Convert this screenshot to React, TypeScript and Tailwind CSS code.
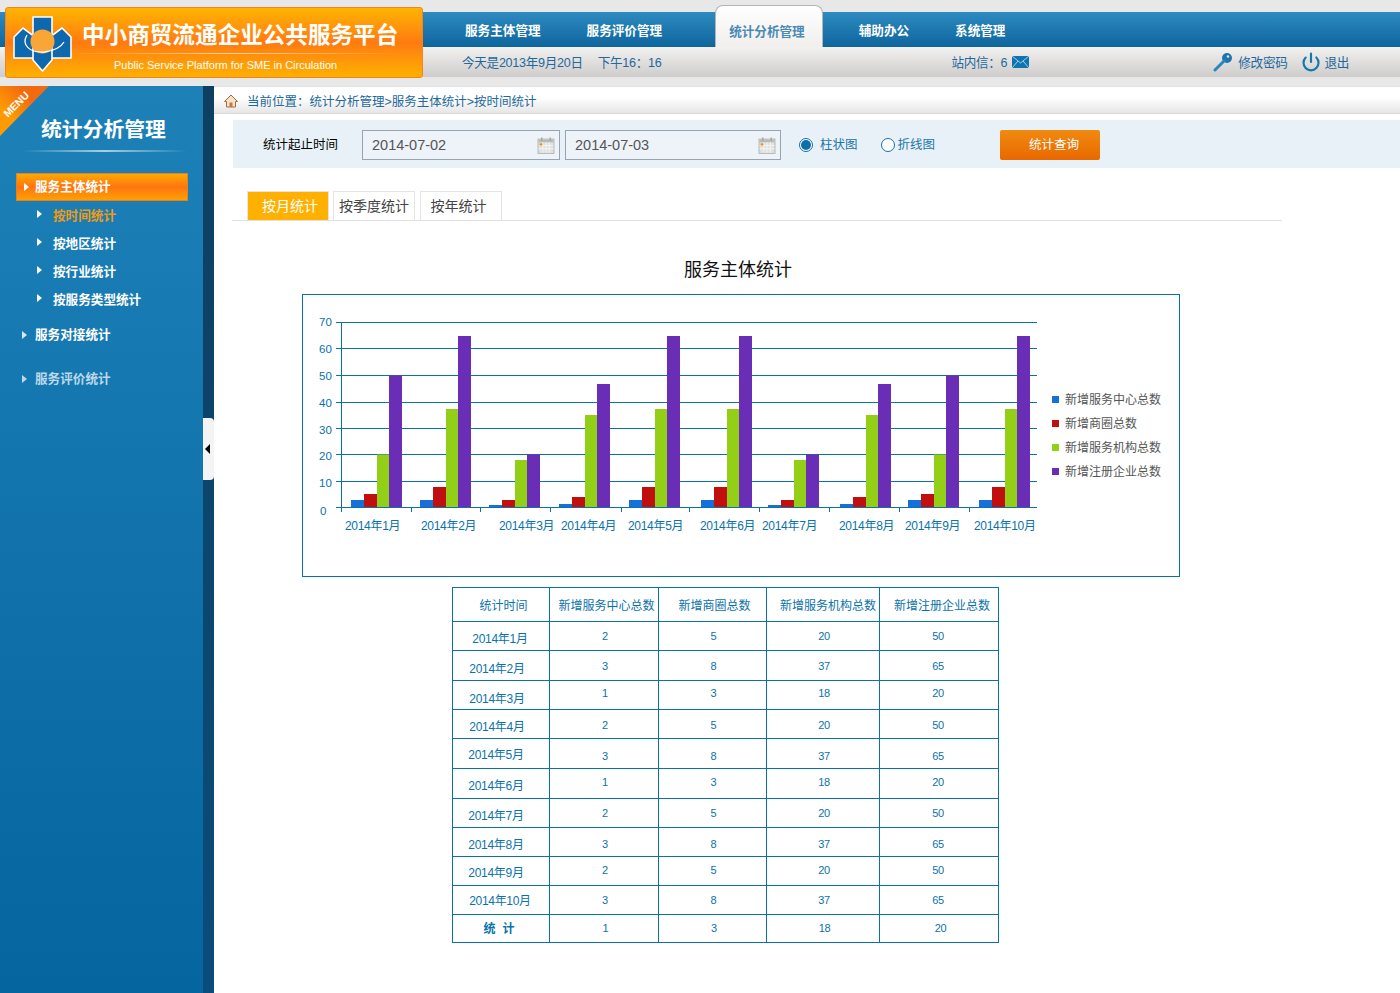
import { Power } from "lucide-react";

const CJK = "font-['Liberation_Sans','Noto_Sans_CJK_SC',sans-serif]";
const BLUE = "#0a72aa";

const series = ["#1570dc", "#c00f0d", "#94cf18", "#6a2db5"];
const legend = ["新增服务中心总数", "新增商圈总数", "新增服务机构总数", "新增注册企业总数"];

// pixel tops of each bar, read off the reference
const barTops: Record<string, number[]> = {
  a: [500, 494, 454.5, 375.5],
  b: [500, 487, 409, 336],
  c: [505, 500, 460, 454.5],
  d: [504, 497, 415, 384],
};

const groups = [
  { x: 351, kind: "a", label: "2014年1月", lx: 345 },
  { x: 420, kind: "b", label: "2014年2月", lx: 421 },
  { x: 489, kind: "c", label: "2014年3月", lx: 499 },
  { x: 559, kind: "d", label: "2014年4月", lx: 561 },
  { x: 629, kind: "b", label: "2014年5月", lx: 628 },
  { x: 701, kind: "b", label: "2014年6月", lx: 700 },
  { x: 768, kind: "c", label: "2014年7月", lx: 762 },
  { x: 840, kind: "d", label: "2014年8月", lx: 839 },
  { x: 908, kind: "a", label: "2014年9月", lx: 905 },
  { x: 979, kind: "b", label: "2014年10月", lx: 974 },
];

const gridY = [322, 348, 375, 402, 428, 454, 481, 507];
const axisLabels = [
  { v: 70, y: 326 },
  { v: 60, y: 353 },
  { v: 50, y: 380 },
  { v: 40, y: 407 },
  { v: 30, y: 434 },
  { v: 20, y: 460 },
  { v: 10, y: 487 },
];
const ticks = [341, 411, 480, 550, 621, 689, 759, 829, 899, 969];

const rows = [
  { t: "2014年1月", h: 29, dt: 2, dn: 0, dx: 1, v: [2, 5, 20, 50] },
  { t: "2014年2月", h: 30, dt: 3, dn: 1, dx: 4, v: [3, 8, 37, 65] },
  { t: "2014年3月", h: 29, dt: 3, dn: -2, dx: 4, v: [1, 3, 18, 20] },
  { t: "2014年4月", h: 29, dt: 2, dn: 1, dx: 4, v: [2, 5, 20, 50] },
  { t: "2014年5月", h: 30, dt: 1, dn: 3, dx: 5, v: [3, 8, 37, 65] },
  { t: "2014年6月", h: 30, dt: 2, dn: -1, dx: 5, v: [1, 3, 18, 20] },
  { t: "2014年7月", h: 29, dt: 2, dn: 0, dx: 5, v: [2, 5, 20, 50] },
  { t: "2014年8月", h: 29, dt: 2, dn: 2, dx: 5, v: [3, 8, 37, 65] },
  { t: "2014年9月", h: 29, dt: 1, dn: -1, dx: 5, v: [2, 5, 20, 50] },
  { t: "2014年10月", h: 29, dt: 0, dn: 0, dx: 1, v: [3, 8, 37, 65] },
];

function Logo() {
  return (
    <svg width="75" height="70" viewBox="0 0 75 70" className="absolute left-0 top-0">
      <g fill="#0e68ad" stroke="#fff" strokeWidth="1.6">
        <polygon points="17,20 8,29 8,50 29,50 29,29" />
        <polygon points="56,20 65,29 65,50 44,50 44,29" />
        <polygon points="27,9 46,9 46,52 36.5,63 27,52" />
      </g>
      <circle cx="36.5" cy="33.5" r="12" fill="#f9a637" />
      <path d="M21 27C15 37 24 45 38 44C48 43 55 39 58 34" fill="none" stroke="#fff" strokeWidth="1.3" />
    </svg>
  );
}

function Header() {
  return (
    <header className="relative h-[86px] bg-[#e8e8e8] pt-[12px]">
      <nav className="flex h-[35px] items-center bg-gradient-to-b from-[#2d8bc0] to-[#0d659d] pl-[465px] pt-[4px] text-[12.6px] font-bold text-white">
        <span>服务主体管理</span>
        <span className="ml-[46px]">服务评价管理</span>
        <span className="-mt-[11px] ml-[53px] flex h-[42px] items-center self-start rounded-t-lg border border-b-0 border-[#b5b5b5] bg-gradient-to-b from-white to-[#f0efec] pl-[13px] pr-[17px] pt-[12px] text-[#4a8ab5]">
          统计分析管理
        </span>
        <span className="ml-[36px]">辅助办公</span>
        <span className="ml-[46px]">系统管理</span>
      </nav>
      <div className="flex h-[30px] items-center bg-gradient-to-b from-[#f3f2ef] to-[#cfcccc] pl-[462px] pt-[3px] text-[12.6px] tracking-[-0.3px] text-[#23689c]">
        <span>今天是2013年9月20日</span>
        <span className="ml-[15px]">下午16：16</span>
        <span className="ml-[290px]">站内信：6</span>
        <svg width="17" height="12" viewBox="0 0 17 12" className="-mt-[3px] ml-[5px]">
          <rect width="17" height="12" fill="#0f75b0" />
          <path d="M0 0L8.5 7L17 0M0 12L6 5M17 12L11 5" fill="none" stroke="#cfe4f0" strokeWidth="0.8" />
        </svg>
        <svg width="20" height="20" viewBox="0 0 20 20" className="-mt-[3px] ml-[184px]">
          <circle cx="14" cy="6" r="5" fill="#1c76ad" />
          <circle cx="15" cy="4.5" r="1.2" fill="#e8e8e8" />
          <path d="M11 9L2 18" stroke="#2d86bb" strokeWidth="3" strokeLinecap="round" />
        </svg>
        <span className="ml-[5px]">修改密码</span>
        <Power size={20} strokeWidth={2.6} className="-mt-[3px] ml-[14px] text-[#1379ae]" />
        <span className="ml-[3px]">退出</span>
      </div>
      <div className="absolute left-[5px] top-[7px] h-[71px] w-[418px] rounded-[3px] border border-[#f5811f] bg-gradient-to-b from-[#ffb400] via-[#ff7a10] to-[#ffb000] text-white">
        <Logo />
        <div className="whitespace-nowrap pl-[76px] pt-[12px] text-[22.6px] font-bold leading-[32px]">
          中小商贸流通企业公共服务平台
        </div>
        <div className="ml-[55px] mt-[1px] h-px w-[340px] bg-gradient-to-r from-transparent via-[#ffd9a0] to-transparent" />
        <div className="pl-[108px] pt-[4px] font-['Liberation_Sans',sans-serif] text-[11px] leading-[14px]">
          Public Service Platform for SME in Circulation
        </div>
      </div>
    </header>
  );
}

function Arrow({ className }: { className: string }) {
  return <span className={`inline-block h-0 w-0 border-y-[4.5px] border-l-[5px] border-y-transparent ${className}`} />;
}

function Sidebar() {
  return (
    <aside className="relative w-[203px] shrink-0 bg-gradient-to-b from-[#1d81b8] to-[#04659f] text-[12.6px] font-bold text-white">
      <svg width="50" height="50" viewBox="0 0 50 50" className="absolute left-0 top-0">
        <defs>
          <linearGradient id="menu" x1="0" y1="1" x2="1" y2="0">
            <stop offset="0.3" stopColor="#ff9a00" />
            <stop offset="0.7" stopColor="#f26a10" />
          </linearGradient>
        </defs>
        <polygon points="0,0 49,0 0,50" fill="url(#menu)" />
        <text x="16" y="22" transform="rotate(-45 16 18)" textAnchor="middle" fontSize="10.5" fontWeight="700" fill="#fff" className="font-['Liberation_Sans',sans-serif]">
          MENU
        </text>
      </svg>
      <div className="pl-[41px] pt-[30px] text-[20.8px] leading-[28px]">统计分析管理</div>
      <div className="ml-[22px] mt-[6px] h-[2px] w-[165px] bg-gradient-to-r from-transparent via-[#a9cfe3] to-transparent" />
      <div className="ml-[16px] mt-[21px] flex h-[28px] w-[172px] items-center gap-[6px] border border-[#e8801f] bg-gradient-to-b from-[#ffa800] via-[#ff7410] to-[#ffa000] pl-[7px]">
        <Arrow className="border-l-white" />
        <span className="pt-[1px]">服务主体统计</span>
      </div>
      <ul className="mt-[1px] pl-[37px]">
        {["按时间统计", "按地区统计", "按行业统计", "按服务类型统计"].map((t, i) => (
          <li key={t} className="flex h-[28px] items-center gap-[11px]">
            <Arrow className="-mt-[4px] border-l-white" />
            <span className={i === 0 ? "text-[#ef9a12]" : ""}>{t}</span>
          </li>
        ))}
      </ul>
      <div className="mt-[7px] flex h-[28px] items-center gap-[8px] pl-[22px]">
        <Arrow className="border-l-[#d6e8f3]" />
        <span>服务对接统计</span>
      </div>
      <div className="mt-[16px] flex h-[28px] items-center gap-[8px] pl-[22px] text-[#bcd8e9]">
        <Arrow className="border-l-[#bcd8e9]" />
        <span>服务评价统计</span>
      </div>
    </aside>
  );
}

function CalendarIcon() {
  return (
    <svg width="18" height="17" viewBox="0 0 16 16" className="mt-[1px] shrink-0">
      <rect x="0.5" y="2" width="15" height="13.5" fill="#dfe1df" stroke="#b9bbb8" />
      <rect x="1" y="2.5" width="14" height="2.5" fill="#b9bbb8" />
      <path d="M4 0.5V3.5M12 0.5V3.5" stroke="#a5a7a4" strokeWidth="1.4" />
      <path d="M1 8H15M1 11H15M5 5V15M8 5V15M11 5V15" stroke="#f7f7f7" strokeWidth="0.8" />
      <rect x="2" y="6" width="2.5" height="2" fill="#f08a1d" />
    </svg>
  );
}

function DateInput({ value, width }: { value: string; width: string }) {
  return (
    <div className={`flex h-[30px] items-center justify-between border border-[#98a4b0] bg-[#edf3f9] pl-[9px] pr-[4px] ${width}`}>
      <span className="pt-[1px] font-['Liberation_Sans',sans-serif] text-[14.5px] text-[#555]">{value}</span>
      <CalendarIcon />
    </div>
  );
}

function Breadcrumb() {
  return (
    <div className="flex h-[28px] items-center border-y border-b-[#d8d8d8] border-t-[#e2e2e2] bg-gradient-to-b from-white from-40% to-[#e6e6e6] pl-[10px] pt-[5px] text-[12.5px] text-[#23689c]">
      <svg width="14" height="14" viewBox="0 0 14 14" className="-mt-[3px]">
        <path d="M7 1L0.5 7.5H2.5V13H11.5V7.5H13.5Z" fill="#f6e3c6" stroke="#a86a45" strokeWidth="1" />
        <rect x="5.5" y="8.5" width="3" height="4.5" fill="#c9793f" />
      </svg>
      <span className="ml-[9px]">当前位置：统计分析管理&gt;服务主体统计&gt;按时间统计</span>
    </div>
  );
}

function FilterBar() {
  return (
    <div className="ml-[19px] mt-[6px] flex h-[48px] items-center bg-[#e9f1f8] pl-[30px] pt-[2px] text-[12.5px]">
      <span className="w-[99px] text-black">统计起止时间</span>
      <DateInput value="2014-07-02" width="w-[198px]" />
      <DateInput value="2014-07-03" width="ml-[5px] w-[216px]" />
      <span className="ml-[18px] flex h-[14px] w-[14px] items-center justify-center rounded-full border border-[#0f6fa8] bg-white">
        <span className="h-[10px] w-[10px] rounded-full bg-[#0f6fa8]" />
      </span>
      <span className="ml-[7px] text-[#1b74a8]">柱状图</span>
      <span className="ml-[23px] h-[14px] w-[14px] rounded-full border border-[#0f6fa8] bg-white" />
      <span className="ml-[3px] text-[#1b74a8]">折线图</span>
      <button className="ml-[65px] h-[30px] w-[100px] rounded-[2px] bg-gradient-to-b from-[#f08a10] to-[#e96800] pl-[8px] text-[12.5px] text-white">
        统计查询
      </button>
    </div>
  );
}

function Tabs() {
  return (
    <div className="ml-[18px] mt-[23px] flex h-[30px] w-[1050px] gap-[4px] border-b border-[#e0e0e0] pl-[15px] text-[14px] text-[#444]">
      <div className="flex h-[29px] w-[82px] items-center justify-center border border-b-0 border-[#e4e4e4] bg-[#ffb000] pl-[4px] text-white">按月统计</div>
      <div className="flex h-[29px] w-[82px] items-center justify-center border border-b-0 border-[#e4e4e4] bg-white">按季度统计</div>
      <div className="ml-px flex h-[29px] w-[82px] items-center justify-center border border-b-0 border-[#e4e4e4] bg-white pr-[5px]">按年统计</div>
    </div>
  );
}

function Chart() {
  return (
    <div className="ml-[88px] mt-[11px] h-[283px] w-[878px] border border-[#0a72aa]">
      <svg width="876" height="281" viewBox="303 295 876 281" className="block">
        {gridY.map((y) => (
          <line key={y} x1={336} x2={1037} y1={y + 0.5} y2={y + 0.5} stroke={BLUE} strokeWidth="1" />
        ))}
        {axisLabels.map((l) => (
          <text key={l.v} x={319} y={l.y} fontSize="11.5" fill={BLUE} className="font-['Liberation_Sans',sans-serif]">
            {l.v}
          </text>
        ))}
        <text x={320} y={515} fontSize="11.5" fill={BLUE} className="font-['Liberation_Sans',sans-serif]">0</text>
        <line x1={341.5} x2={341.5} y1={322} y2={511} stroke={BLUE} />
        {ticks.map((x) => (
          <line key={x} x1={x + 0.5} x2={x + 0.5} y1={507} y2={512} stroke={BLUE} />
        ))}
        {groups.map((g) => (
          <g key={g.label}>
            {barTops[g.kind].map((top, i) => (
              <rect key={i} x={g.x + [0, 13, 26, 38][i]} y={top} width={i === 2 ? 12 : 13} height={507 - top} fill={series[i]} />
            ))}
            <text x={g.lx} y={530} fontSize="12" letterSpacing="-0.3" fill={BLUE}>{g.label}</text>
          </g>
        ))}
        {legend.map((t, i) => (
          <g key={t}>
            <rect x={1052} y={396 + i * 24} width={7} height={7} fill={series[i]} />
            <text x={1065} y={404 + i * 24} fontSize="12" fill="#555">{t}</text>
          </g>
        ))}
      </svg>
    </div>
  );
}

function shift(dy: number, dx = 0) {
  return {
    paddingTop: dy > 0 ? dy * 2 : 0,
    paddingBottom: dy < 0 ? -dy * 2 : 0,
    paddingRight: dx * 2,
  };
}

function StatsTable() {
  const cell = "border border-[#0a72aa] p-0 text-center align-middle leading-none";
  const numPad = ["pl-[2px]", "pl-[2px]", "pl-[2px]", "pr-[2px]"];
  return (
    <table className="ml-[238px] mt-[10px] w-[547px] table-fixed border-collapse text-[12px] text-[#0a72aa]">
      <colgroup>
        <col className="w-[97px]" />
        <col className="w-[109px]" />
        <col className="w-[108px]" />
        <col className="w-[113px]" />
        <col className="w-[119px]" />
      </colgroup>
      <thead>
        <tr className="h-[34px]">
          <th className={`${cell} pl-[5px] pt-[3px] font-normal`}>统计时间</th>
          <th className={`${cell} pl-[5px] pt-[3px] font-normal whitespace-nowrap`}>新增服务中心总数</th>
          <th className={`${cell} pl-[4px] pt-[3px] font-normal`}>新增商圈总数</th>
          <th className={`${cell} pl-[10px] pt-[3px] font-normal whitespace-nowrap`}>新增服务机构总数</th>
          <th className={`${cell} pl-[6px] pt-[3px] font-normal whitespace-nowrap`}>新增注册企业总数</th>
        </tr>
      </thead>
      <tbody className="tracking-[-0.3px]">
        {rows.map((r) => (
          <tr key={r.t} style={{ height: r.h }}>
            <td className={cell} style={shift(r.dt + 0.5, r.dx)}>{r.t}</td>
            {r.v.map((n, i) => (
              <td key={i} className={`${cell} ${numPad[i]} font-['Liberation_Sans',sans-serif] text-[11px]`} style={{ paddingTop: r.dn > 0 ? r.dn * 2 : 0, paddingBottom: r.dn < 0 ? -r.dn * 2 : 0 }}>{n}</td>
            ))}
          </tr>
        ))}
        <tr className="h-[28px]">
          <td className={`${cell} pl-[3px] font-bold tracking-[7px]`}>统计</td>
          {[1, 3, 18, 20].map((n, i) => (
            <td key={i} className={`${cell} pl-[3px] font-['Liberation_Sans',sans-serif] text-[11px]`}>{n}</td>
          ))}
        </tr>
      </tbody>
    </table>
  );
}

export default function App() {
  return (
    <div className={`relative h-[993px] w-[1400px] overflow-hidden bg-white ${CJK}`}>
      <Header />
      <div className="flex h-[907px]">
        <Sidebar />
        <div className="relative w-[11px] shrink-0 bg-gradient-to-b from-[#0e3f60] to-[#0a4c7c]">
          <div className="absolute left-0 top-[332px] flex h-[62px] w-[11px] items-center rounded-r-[4px] bg-[#f4f4f4] pl-[2px]">
            <span className="h-0 w-0 border-y-[5px] border-r-[5px] border-y-transparent border-r-black" />
          </div>
        </div>
        <main className="min-w-0 flex-1">
          <Breadcrumb />
          <FilterBar />
          <Tabs />
          <h1 className="ml-[88px] mt-[36px] h-[26px] w-[878px] pr-[6px] text-center text-[18px] font-normal leading-[26px] text-[#111]">
            服务主体统计
          </h1>
          <Chart />
          <StatsTable />
        </main>
      </div>
    </div>
  );
}
